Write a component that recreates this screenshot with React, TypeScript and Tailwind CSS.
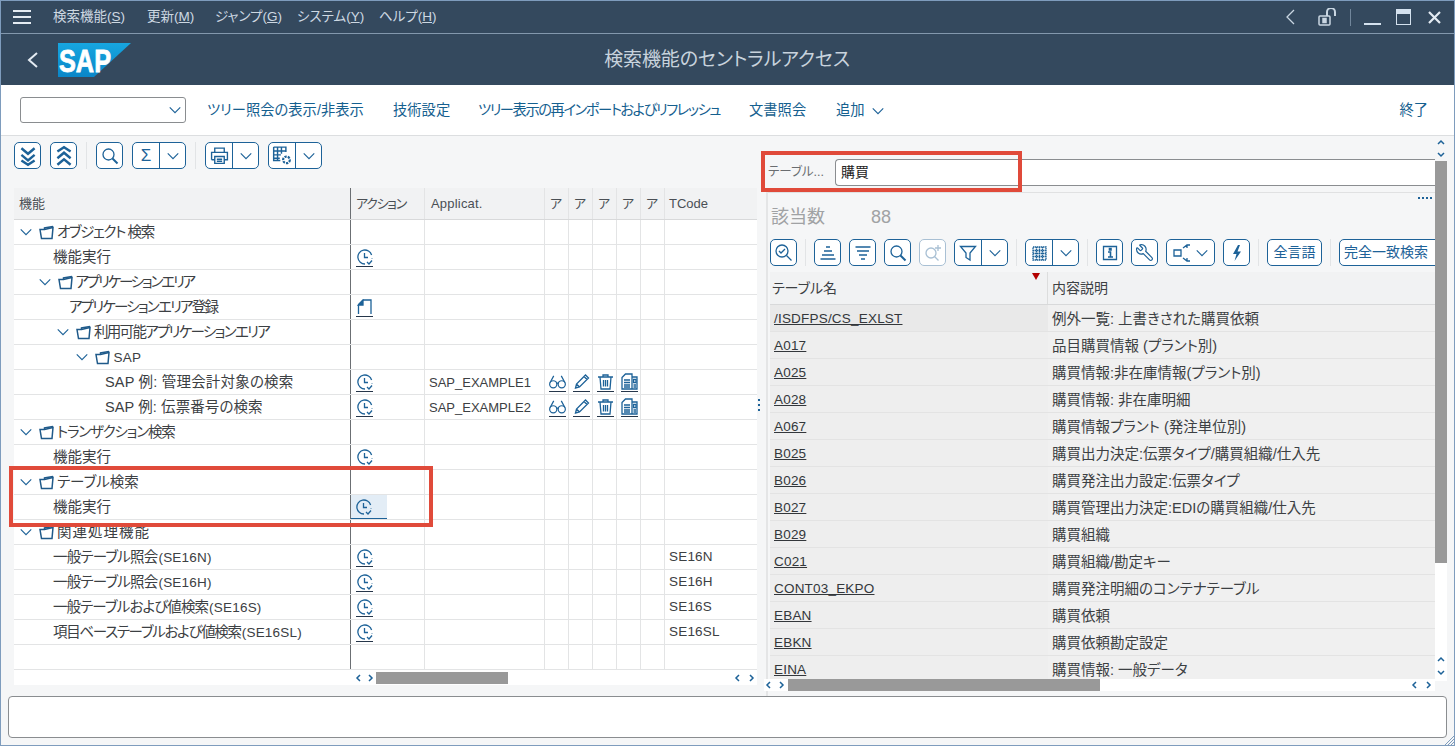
import React from "react";
import { Wrench } from "lucide-react";

const B = "#1d6298";

const Ic = ({ children, s = 16, c = B, w = 1.3, v = 16 }: { children: React.ReactNode; s?: number; c?: string; w?: number; v?: number }) => (
  <svg width={s} height={s} viewBox={`0 0 ${v} ${v}`} fill="none" stroke={c} strokeWidth={w} className="shrink-0">
    {children}
  </svg>
);

const Chev = ({ s = 14, c = B, up = false }: { s?: number; c?: string; up?: boolean }) => (
  <Ic s={s} c={c}>
    <path d={up ? "M2 11l6-6 6 6" : "M2 5l6 6 6-6"} />
  </Ic>
);

const Clock = () => (
  <Ic s={16}>
    <path d="M14.600 6A7 7 0 1 0 8 15" />
    <path d="M7.500 4v4.500h3.500" />
    <path d="M10 13l2 2 3-3.500" />
    <path d="M15 9.500v.5" />
  </Ic>
);
const Glasses = () => (
  <Ic s={17} v={18}>
    <circle cx="4.500" cy="12" r="3.800" />
    <circle cx="13.500" cy="12" r="3.800" />
    <path d="M8 11c.7-.5 1.300-.5 2 0M1.200 10L5 3M16.800 10L13 3" />
  </Ic>
);
const Pencil = () => (
  <Ic s={17} v={17}>
    <path d="M2.500 15l1-4L12.500 2l3 3-9 9-4 1zM3.500 11l3 3M11 3.500l3 3" />
  </Ic>
);
const Trash = () => (
  <Ic s={17} v={17}>
    <path d="M1 4h15M6 4V2h5v2M3 4l1 12h9l1-12M6.500 7v6.500M8.500 7v6.500M10.500 7v6.500" />
  </Ic>
);
const Docs = () => (
  <Ic s={17} v={17}>
    <path d="M1 4.500L4.500 1H11v15H1zM11 4h5v12h-5" />
    <path d="M3 7h6M3 9.500h6M3 12h6M3 14h6M12.500 6.500h2.500v3h-2.500zM12.500 12h2.500M12.500 14h2.500" />
  </Ic>
);
const NewDoc = () => (
  <Ic s={16}>
    <path d="M1.500 15V5.500L6 1h8v14" />
    <path d="M1.500 6L6 1.500V6z" fill={B} />
  </Ic>
);
const Folder = () => (
  <Ic s={15} c="#1f5a8a" w={1.500} v={15}>
    <path d="M1 4.500h4.500L14 2.500l-1 11H2.500z" />
    <path d="M5.500 4.500V3L14 1.500" />
  </Ic>
);

const Btn = ({ children, w = 27, off = false }: { children: React.ReactNode; w?: number; off?: boolean }) => (
  <div
    style={{ width: w }}
    className={`h-[27px] shrink-0 flex items-center justify-center rounded-[5px] border bg-white ${off ? "border-[#a9c0d4]" : "border-[#1d6298]"}`}
  >
    {children}
  </div>
);

const Split = ({ children }: { children: React.ReactNode }) => (
  <div className="h-[27px] w-[54px] shrink-0 flex rounded-[5px] border border-[#1d6298] bg-white">
    <div className="w-[27px] flex items-center justify-center border-r border-[#1d6298]">{children}</div>
    <div className="flex-1 flex items-center justify-center">
      <Chev />
    </div>
  </div>
);

const Sep = ({ mx = "mx-[9px]" }: { mx?: string }) => <div className={`w-px h-[27px] bg-[#e2e4e6] shrink-0 ${mx}`} />;

const Menu = ({ t, k, w }: { t: string; k: string; w: number }) => (
  <div style={{ width: w }} className="shrink-0 whitespace-nowrap text-[13.500px] text-[#cdd8e2]">
    {t}(<span className="underline">{k}</span>)
  </div>
);

type Row = {
  t?: string;
  l?: string;
  d?: number;
  folder?: boolean;
  ind?: number;
  icon?: "clock" | "new";
  app?: string;
  act?: boolean;
  code?: string;
  sel?: boolean;
  cls?: string;
};

const rows: Row[] = [
  { t: "オブジェクト 検索", d: 0, folder: true, cls: "tracking-[-1.400px]" },
  { t: "機能実行", ind: 53, icon: "clock" },
  { t: "アプリケーションエリア", d: 1, folder: true, cls: "tracking-[-2.200px]" },
  { t: "アプリケーションエリア登録", ind: 69, icon: "new", cls: "tracking-[-1.800px]" },
  { t: "利用可能アプリケーションエリア", d: 2, folder: true, cls: "tracking-[-1.700px]" },
  { t: "", l: "SAP", d: 3, folder: true },
  { t: "SAP 例: 管理会計対象の検索", ind: 105, icon: "clock", app: "SAP_EXAMPLE1", act: true, cls: "tracking-[0.200px]" },
  { t: "SAP 例: 伝票番号の検索", ind: 105, icon: "clock", app: "SAP_EXAMPLE2", act: true, cls: "tracking-[0.100px]" },
  { t: "トランザクション検索", d: 0, folder: true, cls: "tracking-[-1.200px]" },
  { t: "機能実行", ind: 53, icon: "clock" },
  { t: "テーブル検索", d: 0, folder: true },
  { t: "機能実行", ind: 53, icon: "clock", sel: true },
  { t: "関連処理機能", d: 0, folder: true, cls: "tracking-[1px]" },
  { t: "一般テーブル照会", l: "(SE16N)", ind: 53, icon: "clock", code: "SE16N", cls: "tracking-[-0.800px]" },
  { t: "一般テーブル照会", l: "(SE16H)", ind: 53, icon: "clock", code: "SE16H", cls: "tracking-[-0.800px]" },
  { t: "一般テーブルおよび値検索", l: "(SE16S)", ind: 53, icon: "clock", code: "SE16S", cls: "tracking-[-0.900px]" },
  { t: "項目ベーステーブルおよび値検索", l: "(SE16SL)", ind: 53, icon: "clock", code: "SE16SL", cls: "tracking-[-1.300px]" },
  {},
];

const found: [string, string][] = [
  ["/ISDFPS/CS_EXLST", "例外一覧: 上書きされた購買依頼"],
  ["A017", "品目購買情報 (プラント別)"],
  ["A025", "購買情報:非在庫情報(プラント別)"],
  ["A028", "購買情報: 非在庫明細"],
  ["A067", "購買情報プラント (発注単位別)"],
  ["B025", "購買出力決定:伝票タイプ/購買組織/仕入先"],
  ["B026", "購買発注出力設定:伝票タイプ"],
  ["B027", "購買管理出力決定:EDIの購買組織/仕入先"],
  ["B029", "購買組織"],
  ["C021", "購買組織/勘定キー"],
  ["CONT03_EKPO", "購買発注明細のコンテナテーブル"],
  ["EBAN", "購買依頼"],
  ["EBKN", "購買依頼勘定設定"],
  ["EINA", "購買情報: 一般データ"],
];

const ULink = ({ children }: { children: React.ReactNode }) => (
  <div className="h-[19px] w-[17px] flex items-center justify-center border-b border-[#26364a] shrink-0">{children}</div>
);

const HCell = ({ w, t, dark, cls = "" }: { w: number; t: string; dark?: boolean; cls?: string }) => (
  <div
    style={{ width: w }}
    className={`shrink-0 flex items-center pl-[5px] border-r text-[13px] text-[#4a4f55] ${dark ? "border-[#6b6f73]" : "border-[#e3e4e5]"} ${cls}`}
  >
    {t}
  </div>
);

const Tiny = ({ d }: { d: string }) => (
  <svg width="10" height="10" viewBox="0 0 10 10" fill="none" stroke="#1d6298" strokeWidth="1.500" className="shrink-0">
    <path d={d} />
  </svg>
);

export default function App() {
  return (
    <div className="w-[1455px] h-[746px] overflow-hidden flex flex-col bg-[#f5f6f7] border border-[#7e9cbd] border-b-0 [font-family:'Liberation_Sans','Noto_Sans_CJK_JP',sans-serif] [font-feature-settings:'palt'] text-[14.500px] text-[#3c4043]">
      {/* title bar */}
      <div className="h-[33px] shrink-0 bg-[#34495e] border-b border-[#8398ad] flex items-center pl-[12px] pr-[13px]">
        <svg width="18" height="14" viewBox="0 0 18 14" fill="none" stroke="#e4ebf2" strokeWidth="2" className="mr-[22px] shrink-0">
          <path d="M0 1h18M0 7h18M0 13h18" />
        </svg>
        <Menu t="検索機能" k="S" w={94} />
        <Menu t="更新" k="M" w={68} />
        <Menu t="ジャンプ" k="G" w={82} />
        <Menu t="システム" k="Y" w={82} />
        <Menu t="ヘルプ" k="H" w={60} />
        <div className="flex-1" />
        <svg width="14" height="16" viewBox="0 0 14 16" fill="none" stroke="#c9d6e2" strokeWidth="1.300" className="mr-[20px]">
          <path d="M10 1L3 8l7 7" />
        </svg>
        <svg width="20" height="18" viewBox="0 0 20 18" fill="none" stroke="#c9d6e2" strokeWidth="1.500" className="mr-[12px]">
          <rect x="1" y="8" width="11" height="9" rx="1" />
          <rect x="5" y="10.500" width="3" height="4" fill="#c9d6e2" />
          <path d="M9 8V4a4 4 0 0 1 8 0v4" strokeWidth="2" />
        </svg>
        <div className="w-px h-[17px] bg-[#71869b] mr-[13px]" />
        <div className="w-[17px] h-[2px] bg-[#d4e1ee] self-end mb-[8px] mr-[15px]" />
        <div className="w-[15px] h-[16px] border border-[#d4e1ee] border-t-[5px] mr-[17px]" />
        <svg width="13" height="13" viewBox="0 0 13 13" stroke="#e4ebf2" strokeWidth="2.200">
          <path d="M1 1l11 11M12 1L1 12" />
        </svg>
      </div>

      {/* header */}
      <div className="h-[51px] shrink-0 bg-[#34495e] flex items-center relative">
        <svg width="14" height="18" viewBox="0 0 14 18" fill="none" stroke="#e4ebf2" strokeWidth="2" className="ml-[25px] mr-[18px]">
          <path d="M11 2L3 9l8 7" />
        </svg>
        <svg width="74" height="35" viewBox="0 0 74 35" className="shrink-0 mt-[1px]">
          <defs>
            <linearGradient id="sapg" x1="0" y1="0" x2="0" y2="1">
              <stop offset="0" stopColor="#17a6e0" />
              <stop offset="1" stopColor="#0a86c8" />
            </linearGradient>
          </defs>
          <polygon points="0,0 73,0 36,34 0,34" fill="url(#sapg)" />
          <text x="1" y="29" fontFamily="Liberation Sans" fontWeight="700" fontSize="31" fill="#fff" stroke="#fff" strokeWidth="0.800" textLength="52" lengthAdjust="spacingAndGlyphs">
            SAP
          </text>
        </svg>
        <div className="flex-1 text-center text-[19px] text-[#c8d3dd] tracking-[-0.100px] pr-[132px] mt-[2px]">検索機能のセントラルアクセス</div>
      </div>

      {/* app toolbar */}
      <div className="h-[51px] shrink-0 bg-white border-b border-[#dcdee0] flex items-center pl-[19px] pr-[26px] text-[14.300px] text-[#15608f]">
        <div className="w-[166px] h-[26px] rounded-[3px] border border-[#8a8d90] flex items-center justify-end pr-[3px] mr-[21px] shrink-0">
          <Chev />
        </div>
        <div className="w-[186px] shrink-0 whitespace-nowrap pt-[2px]">ツリー照会の表示/非表示</div>
        <div className="w-[85px] shrink-0 whitespace-nowrap pt-[2px]">技術設定</div>
        <div className="w-[271px] shrink-0 whitespace-nowrap tracking-[-1.450px] pt-[2px]">ツリー表示の再インポートおよびリフレッシュ</div>
        <div className="w-[87px] shrink-0 whitespace-nowrap pt-[2px]">文書照会</div>
        <div className="flex items-center gap-[6px] shrink-0 whitespace-nowrap pt-[2px]">
          追加
          <Chev />
        </div>
        <div className="flex-1" />
        <div className="whitespace-nowrap pt-[2px]">終了</div>
      </div>

      {/* content */}
      <div className="h-[560px] shrink-0 flex">
        {/* left panel */}
        <div className="w-[759px] shrink-0 pl-[13px] pt-[6px] flex flex-col relative">
          <div className="flex items-center h-[27px]">
            <Btn>
              <Ic s={22} v={20} w={2.200}>
                <path d="M4 3l6 5 6-5M4 9l6 5 6-5M4 14l6 4 6-4" />
              </Ic>
            </Btn>
            <div className="w-[9px]" />
            <Btn>
              <Ic s={22} v={20} w={2.200}>
                <path d="M4 6l6-4 6 4M4 12l6-5 6 5M4 18l6-5 6 5" />
              </Ic>
            </Btn>
            <Sep />
            <Btn>
              <Ic s={18} v={18}>
                <circle cx="7.500" cy="7.500" r="5.500" />
                <path d="M11.500 11.500l5 5" strokeWidth="2" />
              </Ic>
            </Btn>
            <div className="w-[9px]" />
            <Split>
              <span className="text-[17px] leading-none text-[#1d6298]">Σ</span>
            </Split>
            <Sep />
            <Split>
              <Ic s={19} v={18}>
                <path d="M4.500 6V2h9v4M1.500 13V6h15v7h-3M4.500 13h-3M4.500 10h9v6.500h-9zM6.500 12.500h5M6.500 14.500h5" />
              </Ic>
            </Split>
            <div className="w-[9px]" />
            <Split>
              <Ic s={20} v={18}>
                <path d="M1.500 1h11v4.500M1.500 1v12h6M1.500 4.500H12M1.500 8H8M1.500 11H7M5 1v12M8.500 1v6" />
                <circle cx="13" cy="12.500" r="3" strokeDasharray="2 1" strokeWidth="2" />
              </Ic>
            </Split>
          </div>

          <div className="mt-[19px] w-[743px]">
            <div className="h-[32px] flex bg-[#f1f2f3] border-b border-[#d8d9da]">
              <HCell w={337} t="機能" dark />
              <HCell w={74} t="アクション" cls="tracking-[-1.300px]" />
              <HCell w={120} t="Applicat." cls="tracking-[0.200px] pl-[6px]" />
              <HCell w={24} t="ア" />
              <HCell w={24} t="ア" />
              <HCell w={24} t="ア" />
              <HCell w={24} t="ア" />
              <HCell w={24} t="ア" />
              <div className="flex-1 flex items-center pl-[4px] text-[13px] text-[#4a4f55]">TCode</div>
            </div>
            {rows.map((r, i) => (
              <div key={i} className="h-[25px] flex bg-white border-b border-[#e3e4e5]">
                <div
                  style={{ paddingLeft: r.folder ? 5 + 18.500 * (r.d || 0) : (r.ind || 0) - 14 }}
                  className="w-[337px] shrink-0 flex items-center border-r border-[#6b6f73] whitespace-nowrap text-[14.500px]"
                >
                  {r.folder && (
                    <div className="flex items-center gap-[6px] mr-[3px] shrink-0">
                      <Chev />
                      <Folder />
                    </div>
                  )}
                  <span className={`pt-[2px] ${r.cls || ""}`}>{r.t}</span>
                  {r.l && <span className="text-[13.500px] tracking-[0.200px] ml-[1px] pt-[2px]">{r.l}</span>}
                </div>
                <div className={`w-[74px] shrink-0 flex items-center border-r border-[#e3e4e5] ${r.sel ? "" : "pl-[5px]"}`}>
                  {r.sel ? (
                    <div className="w-[36px] h-[24px] bg-[#e3edf6] border-b border-[#1d6298] pl-[5px] flex items-center">
                      <Clock />
                    </div>
                  ) : (
                    r.icon && <ULink>{r.icon === "new" ? <NewDoc /> : <Clock />}</ULink>
                  )}
                </div>
                <div className="w-[120px] shrink-0 flex items-center pl-[4px] pt-[1px] border-r border-[#e3e4e5] text-[13px]">{r.app}</div>
                {[<Glasses />, <Pencil />, <Trash />, <Docs />, null].map((ic, j) => (
                  <div key={j} className="w-[24px] shrink-0 flex items-center pl-[4px] border-r border-[#e3e4e5]">
                    {r.act && ic && <ULink>{ic}</ULink>}
                  </div>
                ))}
                <div className="flex-1 flex items-center pl-[4px] pt-[1px] text-[13.500px] tracking-[0.200px]">{r.code}</div>
              </div>
            ))}
            <div className="h-[15px] bg-white flex items-center pl-[337px]">
              <div className="w-[24px] flex items-center justify-center gap-[1px] ml-[1px]">
                <Tiny d="M6 2L3 5l3 3" />
                <Tiny d="M4 2l3 3-3 3" />
              </div>
              <div className="w-[132px] h-[12px] bg-[#999999]" />
              <div className="flex-1" />
              <div className="flex items-center gap-[3px] mr-[1px]">
                <Tiny d="M6 2L3 5l3 3" />
                <Tiny d="M4 2l3 3-3 3" />
              </div>
            </div>
          </div>
          <div className="absolute left-[759px] top-[263px] flex flex-col gap-[3px] -translate-x-[2px]">
            <div className="w-[2px] h-[2px] bg-[#1d6298]" />
            <div className="w-[2px] h-[2px] bg-[#1d6298]" />
            <div className="w-[2px] h-[2px] bg-[#1d6298]" />
          </div>
          <div className="absolute left-[8px] top-[330px] w-[424px] h-[61px] border-4 border-[#e04a3a]" />
        </div>

        {/* right panel */}
        <div className="w-[675px] shrink-0 pl-[6px] flex flex-col relative">
          <div className="h-[23px] shrink-0" />
          <div className="h-[27px] flex items-center shrink-0">
            <div className="w-[69px] shrink-0 pl-[2px] text-[12.500px] text-[#6a6d70] whitespace-nowrap">テーブル...</div>
            <div className="flex-1 h-[27px] bg-white border border-r-0 border-[#8a8d90] rounded-l-[4px] pl-[5px] flex items-center text-[14px] text-[#222]">
              購買
            </div>
          </div>
          <div className="mt-[6px] flex-1 flex flex-col border-l-2 border-[#e4e5e6] min-h-0">
            <div className="h-[10px] shrink-0 border-t border-[#e0e1e2] flex justify-end items-center gap-[2px] pr-[3px]">
              <div className="w-[2px] h-[2px] bg-[#1d6298]" />
              <div className="w-[2px] h-[2px] bg-[#1d6298]" />
              <div className="w-[2px] h-[2px] bg-[#1d6298]" />
              <div className="w-[2px] h-[2px] bg-[#1d6298]" />
            </div>
            <div className="h-[37px] shrink-0 flex items-center pl-[3px] pb-[6px] text-[18px] text-[#a0a2a4]">
              <span className="w-[100px]">該当数</span>
              <span>88</span>
            </div>
            <div className="h-[27px] shrink-0 flex items-center pl-[2px] overflow-hidden">
              <Btn>
                <Ic s={19} v={19}>
                  <circle cx="8" cy="8" r="6" />
                  <path d="M5 8l2 2 4-4M12.500 12.500l5 5" />
                </Ic>
              </Btn>
              <Sep mx="mx-[8px]" />
              <Btn>
                <Ic s={18} v={18}>
                  <path d="M7 3h4M5 7h8M3 11h12M1.500 15h15" />
                </Ic>
              </Btn>
              <div className="w-[8px] shrink-0" />
              <Btn>
                <Ic s={18} v={18}>
                  <path d="M1.500 3h15M3 7h12M5 11h8M7 15h4" />
                </Ic>
              </Btn>
              <div className="w-[8px] shrink-0" />
              <Btn>
                <Ic s={18} v={18}>
                  <circle cx="7.500" cy="7.500" r="5.500" />
                  <path d="M11.500 11.500l5 5" strokeWidth="2" />
                </Ic>
              </Btn>
              <div className="w-[8px] shrink-0" />
              <Btn off>
                <Ic s={18} v={18} c="#a9c0d4">
                  <circle cx="7" cy="9" r="5" />
                  <path d="M10.500 12.500l4 4M14 1v6M11 4h6" />
                </Ic>
              </Btn>
              <div className="w-[8px] shrink-0" />
              <Split>
                <Ic s={18} v={18}>
                  <path d="M1.500 2.500h15L11 9v7l-4-2.500V9z" />
                </Ic>
              </Split>
              <Sep mx="mx-[8px]" />
              <Split>
                <Ic s={18} v={18}>
                  <path d="M3 3h13v13H3zM3 6.500h13M3 9.500h13M3 12.500h13M6.500 3v13M9.500 3v13M12.500 3v13" strokeDasharray="1.500 .5" />
                </Ic>
              </Split>
              <Sep mx="mx-[8px]" />
              <Btn>
                <Ic s={18} v={18}>
                  <path d="M2.500 2.500h13v13h-13z" />
                  <path d="M7 8h2.500v5M7 13h5M8.500 4.500h1.500v1.500h-1.500z" strokeWidth="1.600" />
                </Ic>
              </Btn>
              <div className="w-[8px] shrink-0" />
              <Btn>
                <Wrench size={19} strokeWidth={1.500} color={B} className="-scale-x-100" />
              </Btn>
              <div className="w-[8px] shrink-0" />
              <Btn w={49}>
                <Ic s={20} v={20}>
                  <path d="M2 7h7v6H2zM11 5l4-3h3M15 2v3M11 15l4 3h3M15 18v-3" />
                </Ic>
                <div className="w-[3px]" />
                <Chev />
              </Btn>
              <div className="w-[8px] shrink-0" />
              <Btn>
                <svg width="12" height="18" viewBox="0 0 12 18">
                  <path d="M7 1L2 10h3.500L3.500 17 10 7.500H6.500L9 1z" fill="#1d6298" />
                </svg>
              </Btn>
              <Sep mx="mx-[8px]" />
              <Btn w={55}>
                <span className="text-[14px] text-[#1d6298]">全言語</span>
              </Btn>
              <Sep mx="mx-[8px]" />
              <div className="h-[27px] w-[110px] shrink-0 rounded-[5px] border border-[#1d6298] bg-white pl-[4px] flex items-center text-[14px] text-[#1d6298] whitespace-nowrap">
                完全一致検索
              </div>
            </div>

            <div className="mt-[6px] h-[407px] shrink-0 ml-[2px] overflow-hidden bg-[#eeeeee] relative">
              <div className="h-[33px] flex bg-[#f1f2f3] border-b border-[#d8d9da]">
                <div className="w-[278px] shrink-0 pl-[2px] flex items-center text-[14px] border-r border-[#dcdddd]">テーブル名</div>
                <div className="flex-1 pl-[4px] flex items-center text-[14px]">内容説明</div>
              </div>
              <svg width="8" height="7" className="absolute left-[262px] top-[1px]">
                <polygon points="0,0 8,0 4,7" fill="#b30000" />
              </svg>
              {found.map(([a, b], i) => (
                <div key={a} className={`h-[27px] flex border-b border-[#e3e3e3] ${i === 0 ? "bg-[#e9e9e9]" : ""}`}>
                  <div className="w-[278px] shrink-0 pl-[4px] pt-[3px] flex items-center text-[13.500px] tracking-[0.200px] underline text-[#33373b]">{a}</div>
                  <div className="flex-1 pl-[4px] pt-[3px] flex items-center text-[14.500px] whitespace-nowrap bg-[#f0f0f0]">{b}</div>
                </div>
              ))}
            </div>
            <div className="h-[12px] shrink-0 flex items-center ml-[-4px] relative">
              <div className="flex items-center gap-[2px] w-[24px] h-[12px] shrink-0 bg-white">
                <Tiny d="M6 2L3 5l3 3" />
                <Tiny d="M4 2l3 3-3 3" />
              </div>
              <div className="w-[312px] h-[12px] bg-[#999999]" />
              <div className="flex-1 h-[12px] bg-white flex items-center justify-end">
                <div className="flex items-center gap-[3px] mr-[2px]">
                  <Tiny d="M6 2L3 5l3 3" />
                  <Tiny d="M4 2l3 3-3 3" />
                </div>
              </div>
            </div>
          </div>
          <div className="absolute left-[1px] top-[15px] w-[261px] h-[41px] border-4 border-[#e04a3a]" />
        </div>

        {/* right scrollbar */}
        <div className="w-[12px] shrink-0 flex flex-col items-center">
          <div className="h-[25px] flex flex-col items-center justify-center gap-[1px] w-full">
            <Tiny d="M2 6l3-3 3 3" />
            <Tiny d="M2 4l3 3 3-3" />
          </div>
          <div className="h-[402px] w-full bg-[#999999]" />
          <div className="h-[92px] w-full bg-white" />
          <div className="flex flex-col items-center gap-[2px] bg-white w-full pb-[4px]">
            <Tiny d="M2 6l3-3 3 3" />
            <Tiny d="M2 4l3 3 3-3" />
          </div>
        </div>
      </div>

      {/* status bar */}
      <div className="h-[50px] shrink-0 px-[7px] relative border-b border-[#7e9cbd]">
        <div className="h-[42px] bg-white border border-[#8a8d90] rounded-[4px]" />
        <svg width="9" height="9" viewBox="0 0 9 9" stroke="#7e9cbd" className="absolute right-0 bottom-0">
          <path d="M0 9l9-9M3 9l6-6M6 9l3-3" />
        </svg>
      </div>
    </div>
  );
}
